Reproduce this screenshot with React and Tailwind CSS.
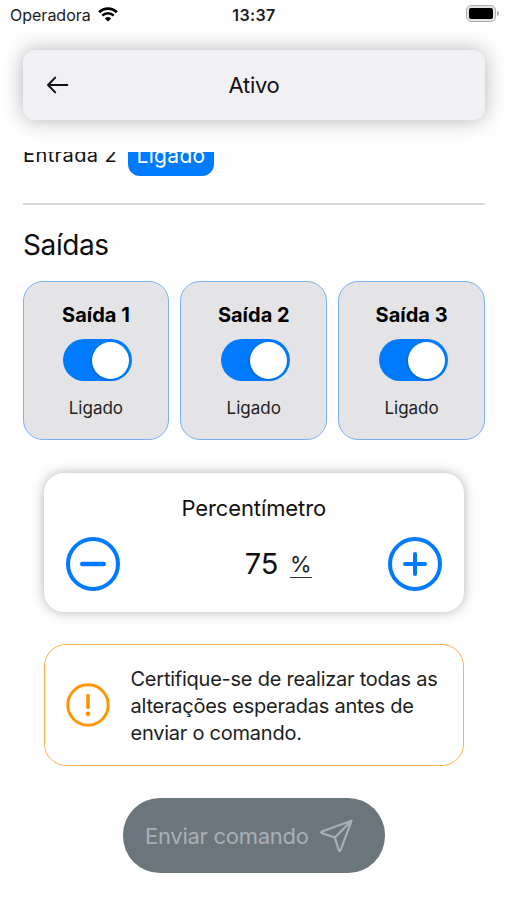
import React from "react";

function StatusBar() {
  return (
    <div className="flex h-[30px] items-center justify-between pr-[8px] pl-[10px] text-[#1c1c1c]">
      <div className="flex w-[200px] items-center gap-[7px]">
        <span className="text-[16px] leading-[20px]">Operadora</span>
        <svg className="-mt-[2px]" width="20" height="15" viewBox="0 0 20 15" fill="none">
          <path d="M1.2 5.3A12.4 12.4 0 0 1 18.8 5.3" stroke="#000" strokeWidth="2.7" />
          <path d="M4.3 8.7A8 8 0 0 1 15.7 8.7" stroke="#000" strokeWidth="2.5" />
          <path d="M10 14.6 6.9 11.4A4.5 4.5 0 0 1 13.1 11.4Z" fill="#000" />
        </svg>
      </div>
      <span className="-ml-px text-[16px] leading-[20px] font-semibold tracking-[0.4px]">13:37</span>
      <div className="flex w-[200px] items-center justify-end gap-px">
        <div className="mb-[3px] h-[17px] w-[30px] rounded-[5px] border-[1.5px] border-[#b0b0b0] bg-[#e4e4e4] p-[2px]">
          <div className="h-full w-full rounded-[2px] bg-black" />
        </div>
        <div className="mb-[3px] h-[5px] w-[2px] rounded-r-full bg-[#b0b0b0]" />
      </div>
    </div>
  );
}

function Header() {
  return (
    <header className="mr-[22px] ml-[23px] mt-[20px] grid h-[70px] grid-cols-[1fr_auto_1fr] items-center rounded-[12px] bg-[#f1f0f5] px-[23px] pb-px shadow-[0_0_20px_rgba(0,0,0,0.3)]">
      <svg width="24" height="22" viewBox="0 0 24 22" fill="none" stroke="#111" strokeWidth="2" strokeLinecap="round" strokeLinejoin="round">
        <path d="M9.2 3.6 2 11l7.2 7.4M2.5 11h18.8" />
      </svg>
      <h1 className="text-[22px] leading-[28px] tracking-[-0.3px] text-[#111]">Ativo</h1>
    </header>
  );
}

function OutputCard({ name }) {
  return (
    <div className="flex h-[159px] flex-1 flex-col items-center rounded-[20px] border border-[#78b1f4] bg-[#e4e4e6] pt-[20px]">
      <span className="text-[20px] leading-[26px] font-bold text-black">{name}</span>
      <div className="mt-[11px] ml-[3px] flex h-[42px] w-[69px] items-center justify-end rounded-full bg-[#007bff] pr-[3px]">
        <div className="h-[37px] w-[37px] rounded-full bg-white shadow-[-1px_1px_3px_rgba(0,0,0,0.2)]" />
      </div>
      <span className="mt-[16px] text-[17px] leading-[22px] text-[#222]">Ligado</span>
    </div>
  );
}

function RoundIcon({ plus }) {
  return (
    <svg width="54" height="54" viewBox="0 0 54 54" fill="none" stroke="#007bff" strokeWidth="4" strokeLinecap="round">
      <circle cx="27" cy="27" r="25" />
      {plus ? <path d="M17 27h20M27 17v20" /> : <path d="M16.2 27h21.6" strokeWidth="4.4" />}
    </svg>
  );
}

export default function App() {
  return (
    <div className="h-[900px] w-[507px] overflow-hidden bg-[#fefefe] font-['Inter','Liberation_Sans',sans-serif]">
      <StatusBar />
      <Header />
      <main className="mt-[32px] h-[748px] overflow-hidden">
        <div className="-mt-[16px] mx-[23px] flex h-[40px] items-center gap-[11px]">
          <span className="-mt-[3px] w-[94px] text-[20px] leading-[26px] tracking-[0.4px] whitespace-nowrap text-[#111]">Entrada 2</span>
          <span className="flex h-[40px] w-[86px] items-center justify-center rounded-[12px] bg-[#007bff] pb-[1px] text-[21px] leading-[26px] tracking-[0.3px] text-white">Ligado</span>
        </div>
        <div className="mr-[22px] ml-[23px] mt-[27px] h-[2px] bg-[#d7d7d7]" />
        <h2 className="mx-[23px] mt-[22px] text-[28px] leading-[36px] tracking-[-0.4px] text-[#0c0c0c]">Saídas</h2>
        <div className="mr-[22px] ml-[22.5px] mt-[18px] flex gap-[11px]">
          <OutputCard name="Saída 1" />
          <OutputCard name="Saída 2" />
          <OutputCard name="Saída 3" />
        </div>
        <section className="mr-[43px] ml-[44px] mt-[33px] h-[139px] rounded-[20px] bg-white pr-[22px] pl-[21.5px] pt-[21px] shadow-[0_0_12px_rgba(0,0,0,0.3)]">
          <h3 className="text-center text-[22px] leading-[28px] tracking-[-0.1px] text-[#111]">Percentímetro</h3>
          <div className="mt-[15px] flex items-center justify-between">
            <RoundIcon />
            <div className="flex items-baseline gap-[12px] pl-[49px]">
              <span className="text-[29px] leading-[36px] tracking-[-0.3px] text-[#111]">75</span>
              <span className="-translate-y-[2px] border-b-[1.5px] border-[#333] text-[22px] leading-[25px] text-[#222]">%</span>
            </div>
            <RoundIcon plus />
          </div>
        </section>
        <section className="mr-[43px] ml-[43.5px] mt-[32px] flex h-[122px] items-center gap-[21px] rounded-[22px] border-[1.5px] border-[#fbb14e] bg-white pl-[21px]">
          <svg width="44" height="44" viewBox="0 0 44 44" fill="none">
            <circle cx="22" cy="22" r="20.2" stroke="#ff9500" strokeWidth="3" />
            <path d="M22 12.5v12" stroke="#ff9500" strokeWidth="3.6" strokeLinecap="round" />
            <circle cx="22" cy="30.8" r="2.4" fill="#ff9500" />
          </svg>
          <p className="pt-[2px] text-[20px] leading-[27px] tracking-[-0.24px] whitespace-nowrap text-[#1d1d1d]">
            Certifique-se de realizar todas as
            <br />
            alterações esperadas antes de
            <br />
            enviar o comando.
          </p>
        </section>
        <button className="mt-[32px] ml-[123px] flex h-[75px] w-[262px] items-center gap-[11px] rounded-[37px] bg-[#6b757c] pl-[22px] text-[#a9afb6]">
          <span className="text-[22px] leading-[28px] tracking-[-0.27px] whitespace-nowrap">Enviar comando</span>
          <svg className="mt-px" width="34" height="34" viewBox="0 0 34 34" fill="none" stroke="currentColor" strokeWidth="2.2" strokeLinejoin="round">
            <path d="M31.5 1.8 1.8 12.5c-.8.3-.8 1.2 0 1.6L14.8 18.5 18.8 31.4c.4 1 1.3 1 1.7 0ZM14.8 18.5 31.5 1.8" />
          </svg>
        </button>
      </main>
    </div>
  );
}
